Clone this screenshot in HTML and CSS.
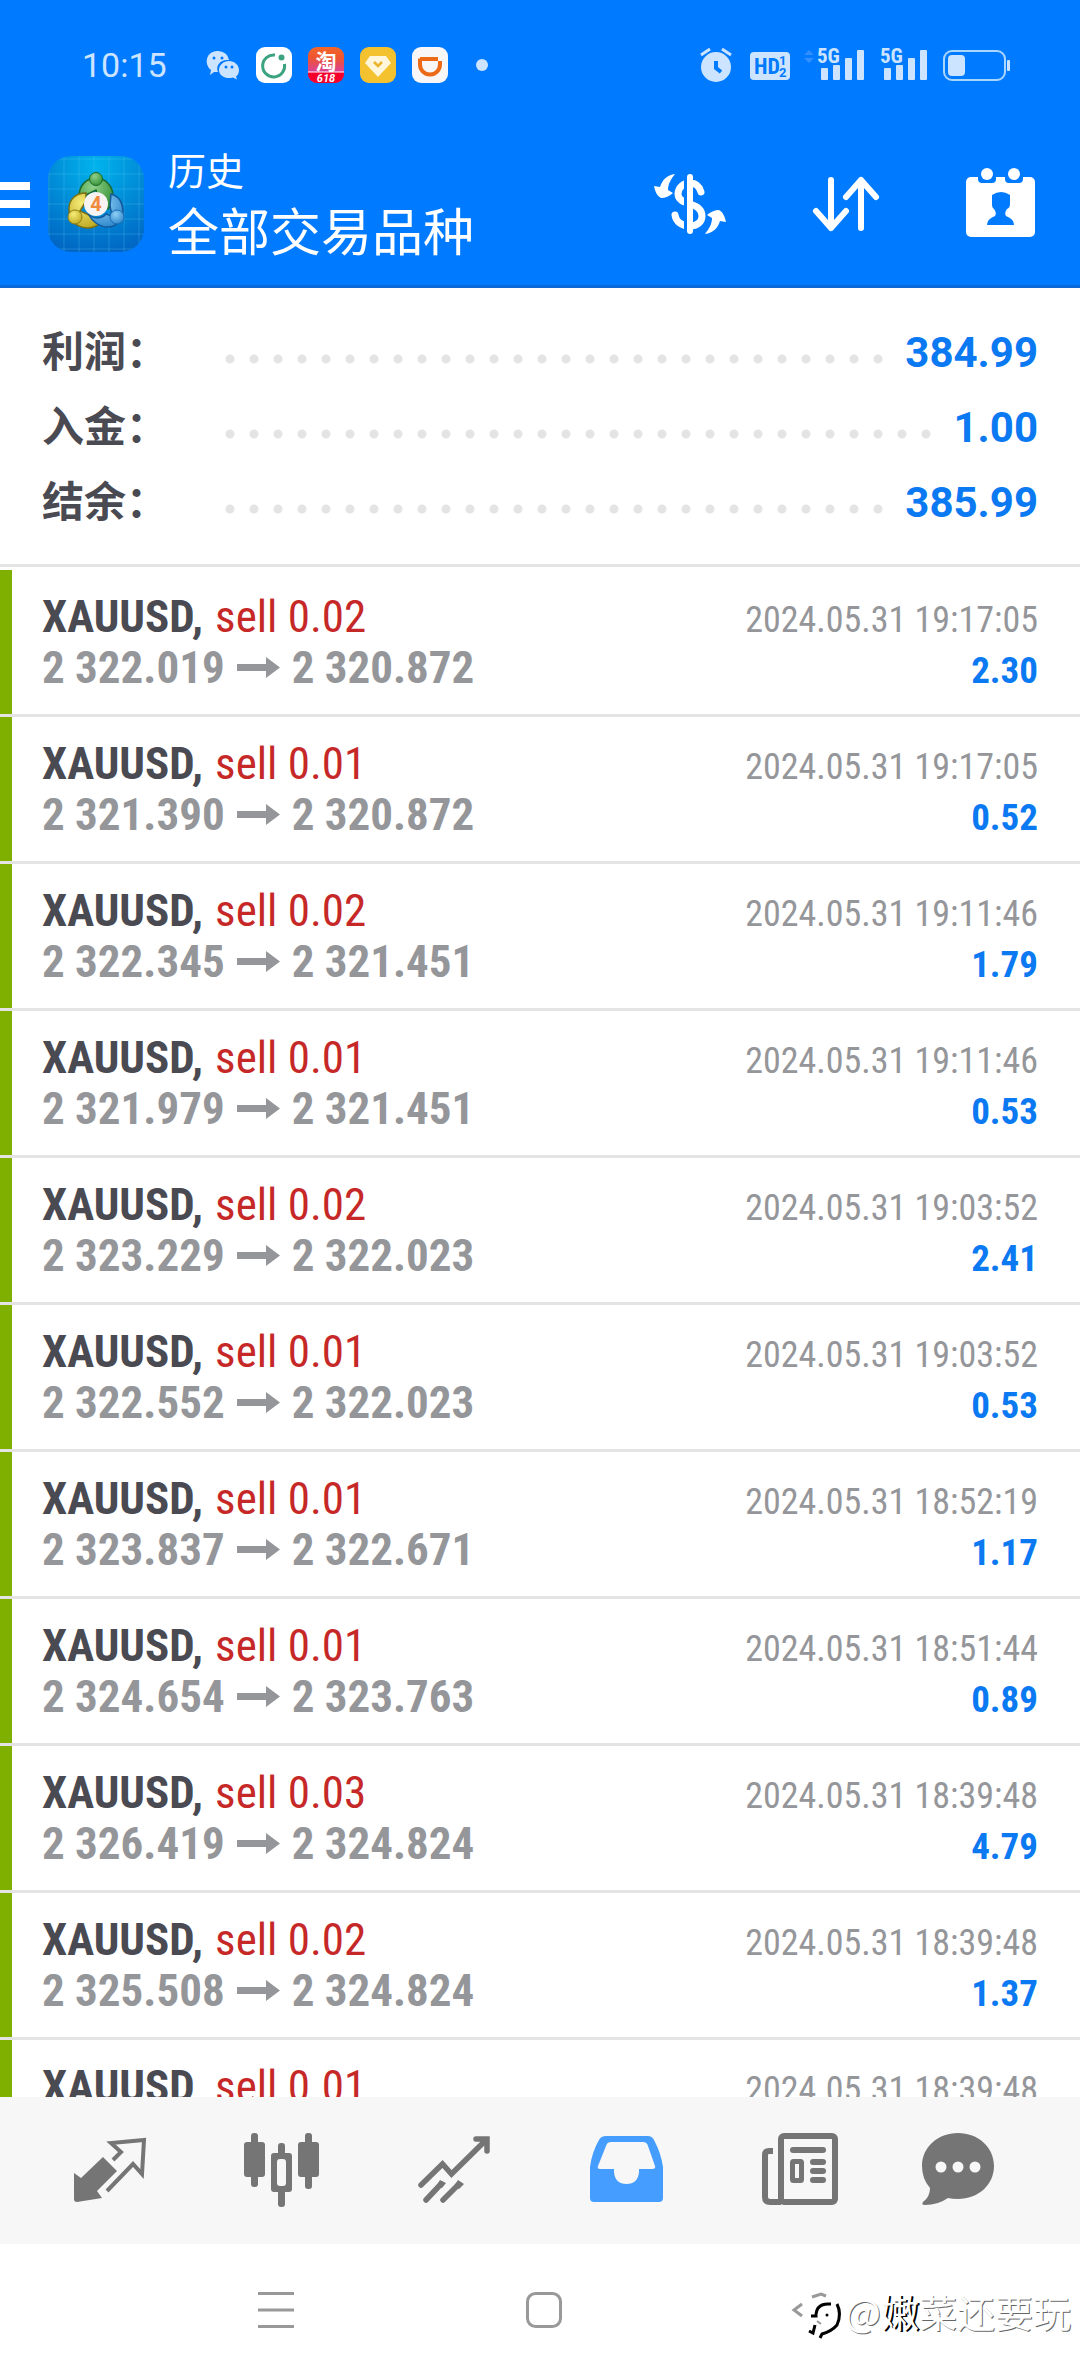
FILE: index.html
```
<!DOCTYPE html>
<html lang="zh-CN">
<head>
<meta charset="utf-8">
<meta name="viewport" content="width=device-width, initial-scale=1">
<title>历史</title>
<link rel="stylesheet" href="styles.css">
</head>
<body>
<header class="top">
  <div class="status">
    <div class="status-left">
      <time class="clock">10:15</time>
      <svg class="wechat" width="34" height="36" viewBox="0 0 34 36" aria-hidden="true">
        <g fill="#cce4ff"><path d="M12 4a11 10 0 0 1 11 9c-8-1-14 5-11 12l-4 0-4 3 1-5A10.500 10.500 0 0 1 12 4z"/><path d="M23 14c5.500 0 10 4 10 9 0 3-1 5-3 6.500l1 3-4-2c-7 2-14-1.500-14-7.500 0-5 4.500-9 10-9z"/></g>
        <g fill="#007aff"><circle cx="8" cy="11" r="1.500"/><circle cx="16" cy="11" r="1.500"/><circle cx="20" cy="20" r="1.500"/><circle cx="26" cy="20" r="1.500"/></g>
      </svg>
      <svg width="36" height="36" viewBox="0 0 36 36" aria-hidden="true"><rect width="36" height="36" rx="9" fill="#fff"/><path d="M19 8A11 11 0 1 0 28.500 17" fill="none" stroke="#3ba37f" stroke-width="3"/><circle cx="25.500" cy="10.500" r="3" fill="#3ba37f"/></svg>
      <svg width="36" height="36" viewBox="0 0 36 36" aria-hidden="true">
        <defs><linearGradient id="tb" x1="0" y1="0" x2="0" y2="1"><stop offset="0" stop-color="#f2672a"/><stop offset=".3" stop-color="#ee5530"/><stop offset=".7" stop-color="#d8419a"/></linearGradient><clipPath id="tc"><rect width="36" height="36" rx="9"/></clipPath></defs>
        <g clip-path="url(#tc)"><path fill="url(#tb)" d="M0 0h36v36H0z"/><path fill="#f5002d" d="M0 25h36v11H0z"/><path stroke="#fff" d="M0 25h36"/></g>
        <text x="18" y="22" text-anchor="middle" class="tao">淘</text><text x="18" y="35" text-anchor="middle" class="tao-sale">618</text>
      </svg>
      <svg width="36" height="36" viewBox="0 0 36 36" aria-hidden="true"><rect width="36" height="36" rx="9" fill="#f5c22f"/><path d="M10 9h16l5 7-13 14L5 16z" fill="#fff6dc"/><path d="M14 15l4 4 4-4" fill="none" stroke="#eab32a" stroke-width="2.500"/></svg>
      <svg width="36" height="36" viewBox="0 0 36 36" aria-hidden="true"><rect width="36" height="36" rx="9" fill="#f8f6f6"/><path d="M8 12h18M8 11.500v6a10 10 0 0 0 20 0V14" fill="none" stroke="#ec6a17" stroke-width="4"/></svg>
      <svg class="more-dot" width="12" height="12" viewBox="0 0 12 12" aria-hidden="true"><circle cx="6" cy="6" r="6" fill="#cce4ff"/></svg>
    </div>
    <svg width="312" height="36" viewBox="0 0 312 36" aria-hidden="true">
      <g fill="#cce4ff">
        <circle cx="16" cy="20" r="15"/><path d="M1 8l9-6M31 8l-9-6" stroke="#cce4ff" stroke-width="3"/>
        <rect x="50" y="5" width="40" height="28" rx="4"/>
        <g id="bars"><rect x="121" y="21" width="7" height="12" rx="1"/><rect x="133" y="18" width="7" height="15" rx="1"/><rect x="145" y="11" width="7" height="22" rx="1"/><rect x="157" y="3" width="7" height="30" rx="1"/></g>
        <use href="#bars" x="63"/>
        <text x="117" y="16" class="net">5G</text><text x="180" y="16" class="net">5G</text>
        <rect x="248" y="8" width="17" height="21" rx="4"/><rect x="307" y="13" width="3" height="11" rx="1"/>
      </g>
      <path d="M16 14v7l5 4" fill="none" stroke="#007aff" stroke-width="4"/>
      <g fill="#007aff"><text x="54" y="27" class="hd">HD</text><text x="79" y="18" class="hd-sim">1</text><text x="79" y="30" class="hd-sim">2</text></g>
      <path d="M104 8l5-5 5 5zM104 11l5 5 5-5z" fill="#338fff"/>
      <rect x="244" y="4" width="61" height="29" rx="8" fill="none" stroke="#a9d6ff" stroke-width="2"/>
    </svg>
  </div>
  <div class="toolbar">
    <button class="menu" aria-label="菜单"><span></span><span></span><span></span></button>
    <svg width="96" height="96" viewBox="0 0 96 96" aria-hidden="true">
      <defs>
        <radialGradient id="bg" cx=".5" cy=".1" r=".9"><stop offset="0" stop-color="#00b4ec"/><stop offset="1" stop-color="#0068c4"/></radialGradient>
        <pattern id="grid" width="15" height="15" patternUnits="userSpaceOnUse"><path d="M1 0v15M0 3h15" stroke="#5cc4f5" stroke-opacity=".28"/></pattern>
        <radialGradient id="gr" cx=".4" cy=".3" r=".8"><stop offset="0" stop-color="#8fd08a"/><stop offset="1" stop-color="#2b8a2e"/></radialGradient>
        <radialGradient id="ye" cx=".4" cy=".3" r=".8"><stop offset="0" stop-color="#f6ec78"/><stop offset="1" stop-color="#b9a41c"/></radialGradient>
        <radialGradient id="bl" cx=".4" cy=".3" r=".8"><stop offset="0" stop-color="#8ed0f6"/><stop offset="1" stop-color="#2580c8"/></radialGradient>
      </defs>
      <rect width="96" height="96" rx="23" fill="url(#bg)"/><rect width="96" height="96" rx="23" fill="url(#grid)"/>
      <path d="M31 40c0-11 8-18 17-18s17 8 17 18c0 6-2 10-5 13l-8-6-4-13-8 4-6 2z" fill="url(#gr)" stroke="#1c6a2c" stroke-width="1.500"/>
      <path d="M38 37c-10 0-17 6-17 16s6 18 18 19c6 0 10-2 13-5l-11-8-9-4 6-10z" fill="url(#ye)" stroke="#7d7012" stroke-width="1.500"/>
      <path d="M63 38c8 2 12 9 12 17s-6 16-15 16-16-6-19-12c6 4 13 4 17-1l6 2-2-10z" fill="url(#bl)" stroke="#135a9c" stroke-width="1.500"/>
      <circle cx="48" cy="23" r="6.500" fill="url(#gr)" stroke="#1c6a2c"/><circle cx="27" cy="61" r="7" fill="url(#ye)" stroke="#8d7d15"/><circle cx="69" cy="61" r="7" fill="url(#bl)" stroke="#1c6cb0"/>
      <circle cx="48" cy="48" r="12" fill="#f6f3f2"/><text x="48" y="55" text-anchor="middle" class="logo-four">4</text>
    </svg>
    <h1 class="titles"><span class="title-small">历史</span><span class="title-large">全部交易品种</span></h1>
    <div class="actions">
      <button aria-label="货币"><svg width="72" height="72" viewBox="0 0 72 72">
        <path d="M47 24C45 17 40 15 36 15 29 15 24 20 24 26 24 32 30 34 36 36 43 38 48 42 48 48 48 54 43 58 36 58 28 58 22 54 21 47" fill="none" stroke="#fff" stroke-width="7" stroke-linecap="round"/>
        <path d="M31.500 8v56" stroke="#007aff" stroke-width="3"/><path d="M36 9v54" stroke="#fff" stroke-width="6" stroke-linecap="round"/>
        <g fill="#fff"><path id="swap" d="M21 6C13 7 8 12 6 19L0 18c1 5 3 10 7 12 4 0 9-2 12-5l-5-3c0-6 3-11 7-16z"/><use href="#swap" transform="rotate(180 36 36)"/></g></svg></button>
      <button aria-label="排序"><svg width="72" height="72" viewBox="0 0 72 72"><path d="M21 12v48M6 43l15 17 15-17M51 60V12M36 29l15-17 15 17" fill="none" stroke="#fff" stroke-width="6" stroke-linecap="round" stroke-linejoin="round"/></svg></button>
      <button aria-label="日期"><svg width="72" height="72" viewBox="0 0 72 72"><rect y="9" width="69" height="60" rx="5" fill="#fff"/><path d="M12 8v3q0 4 4 4h10q4 0 4-4V8zM39 8v3q0 4 4 4h10q4 0 4-4V8z" fill="#007aff"/><circle cx="21" cy="6" r="6" fill="#fff"/><circle cx="48" cy="6" r="6" fill="#fff"/><path d="M26 27q9-6 18 0v9q0 4-3 5-3 4-1 7 8 3 8 9H21q0-6 8-9 2-3-1-7-2-1-2-5z" fill="#007aff"/></svg></button>
    </div>
  </div>
</header>

<main class="history">
  <dl class="summary">
    <div><dt>利润：</dt><dd>384.99</dd></div>
    <div><dt>入金：</dt><dd>1.00</dd></div>
    <div><dt>结余：</dt><dd>385.99</dd></div>
  </dl>
  <svg class="defs" width="0" height="0" aria-hidden="true"><symbol id="arrow" viewBox="0 0 43 21"><path d="M0 7h29V0l14 10.500L29 21v-7H0z" fill="#95969a"/></symbol></svg>
  <ul class="deals">
    <li><p><strong>XAUUSD,</strong> <span class="sell">sell 0.02</span><time>2024.05.31 19:17:05</time></p><p class="price">2 322.019<svg class="arrow"><use href="#arrow"/></svg>2 320.872<b>2.30</b></p></li>
    <li><p><strong>XAUUSD,</strong> <span class="sell">sell 0.01</span><time>2024.05.31 19:17:05</time></p><p class="price">2 321.390<svg class="arrow"><use href="#arrow"/></svg>2 320.872<b>0.52</b></p></li>
    <li><p><strong>XAUUSD,</strong> <span class="sell">sell 0.02</span><time>2024.05.31 19:11:46</time></p><p class="price">2 322.345<svg class="arrow"><use href="#arrow"/></svg>2 321.451<b>1.79</b></p></li>
    <li><p><strong>XAUUSD,</strong> <span class="sell">sell 0.01</span><time>2024.05.31 19:11:46</time></p><p class="price">2 321.979<svg class="arrow"><use href="#arrow"/></svg>2 321.451<b>0.53</b></p></li>
    <li><p><strong>XAUUSD,</strong> <span class="sell">sell 0.02</span><time>2024.05.31 19:03:52</time></p><p class="price">2 323.229<svg class="arrow"><use href="#arrow"/></svg>2 322.023<b>2.41</b></p></li>
    <li><p><strong>XAUUSD,</strong> <span class="sell">sell 0.01</span><time>2024.05.31 19:03:52</time></p><p class="price">2 322.552<svg class="arrow"><use href="#arrow"/></svg>2 322.023<b>0.53</b></p></li>
    <li><p><strong>XAUUSD,</strong> <span class="sell">sell 0.01</span><time>2024.05.31 18:52:19</time></p><p class="price">2 323.837<svg class="arrow"><use href="#arrow"/></svg>2 322.671<b>1.17</b></p></li>
    <li><p><strong>XAUUSD,</strong> <span class="sell">sell 0.01</span><time>2024.05.31 18:51:44</time></p><p class="price">2 324.654<svg class="arrow"><use href="#arrow"/></svg>2 323.763<b>0.89</b></p></li>
    <li><p><strong>XAUUSD,</strong> <span class="sell">sell 0.03</span><time>2024.05.31 18:39:48</time></p><p class="price">2 326.419<svg class="arrow"><use href="#arrow"/></svg>2 324.824<b>4.79</b></p></li>
    <li><p><strong>XAUUSD,</strong> <span class="sell">sell 0.02</span><time>2024.05.31 18:39:48</time></p><p class="price">2 325.508<svg class="arrow"><use href="#arrow"/></svg>2 324.824<b>1.37</b></p></li>
    <li><p><strong>XAUUSD,</strong> <span class="sell">sell 0.01</span><time>2024.05.31 18:39:48</time></p></li>
  </ul>
</main>

<nav class="tabs">
  <a href="#quotes" aria-label="行情"><svg width="96" height="75" viewBox="0 0 96 75"><path d="M12 40l7 5 22-21 14 14-20 20 5 7-25 4q-3 0-3-3z" fill="#757575"/><path d="M51 27l8-8-10-9 33-3-2 34-9-10-26 27" fill="none" stroke="#757575" stroke-width="4"/></svg></a>
  <a href="#chart" aria-label="图表"><svg width="96" height="75" viewBox="0 0 96 75"><g fill="#757575"><rect x="17" width="7" height="54" rx="3"/><rect x="10" y="9" width="21" height="35" rx="3"/><rect x="71" width="7" height="56" rx="3"/><rect x="64" y="9" width="21" height="35" rx="3"/><rect x="44" y="10" width="7" height="64" rx="3"/><rect x="37" y="20" width="21" height="39" rx="3"/></g><rect x="43" y="26" width="9" height="27" rx="3" fill="#f7f7f7"/></svg></a>
  <a href="#trade" aria-label="交易"><svg width="96" height="75" viewBox="0 0 96 75"><g fill="none" stroke="#757575" stroke-width="5.500" stroke-linecap="round"><path d="M15 52l21.500-21 9 10L79 8M70 6h11v12"/><path d="M20 67l15-16M37 67l15-15"/></g><path d="M34 47l-3 5 5 3 4-5zM52 47l-4 6 5 3 5-5z" fill="#757575"/></svg></a>
  <a href="#history" aria-label="历史" aria-current="page"><svg width="96" height="75" viewBox="0 0 96 75"><path fill="#459dff" fill-rule="evenodd" d="M28 3h42q4 0 6 4 7 13 9 27v31q0 4-4 4H16q-4 0-4-4V34q2-15 9-27 2-4 7-4zm5 6q-4 0-5 4l-8 20q-1 3 2 3h14v3q1 12 12.500 12T61 39v-3h13q4 0 3-3l-7-20q-1-4-5-4z"/></svg></a>
  <a href="#news" aria-label="新闻"><svg width="96" height="75" viewBox="0 0 96 75"><g fill="none" stroke="#757575" stroke-width="6"><rect x="31" y="3" width="54" height="66" rx="3"/><path d="M31 69H20q-5 0-5-5V22q0-4 4-4h4"/><rect x="42.500" y="28.500" width="9" height="19" rx="1" stroke-width="5"/><path d="M43 17h30M63 29h10M63 38h10M63 47h10" stroke-linecap="round"/></g></svg></a>
  <a href="#messages" aria-label="消息"><svg width="96" height="75" viewBox="0 0 96 75"><path d="M36 0c20 0 36 14 36 33S56 66 36 66q-6 0-10-1-10 7-23 7-4 0-2-3 7-5 7-14Q0 46 0 33C0 14 16 0 36 0z" fill="#757575"/><g fill="#f7f7f7"><circle cx="19" cy="34" r="5.500"/><circle cx="36" cy="34" r="5.500"/><circle cx="53" cy="34" r="5.500"/></g></svg></a>
</nav>

<footer class="system">
  <button aria-label="最近任务"><svg width="36" height="36" viewBox="0 0 36 36"><path d="M0 1.500h36M0 18h36M0 34.500h36" stroke="#999" stroke-width="3"/></svg></button>
  <button aria-label="主屏幕"><svg width="36" height="36" viewBox="0 0 36 36"><rect x="1.500" y="1.500" width="33" height="33" rx="8" fill="none" stroke="#999" stroke-width="3"/></svg></button>
  <button aria-label="返回"><svg width="36" height="36" viewBox="0 0 36 36"><path d="M8 12l-8 6 8 6M18 5l9-3 5 2" fill="none" stroke="#999" stroke-width="3"/></svg></button>
  <p class="watermark"><svg width="44" height="50" viewBox="0 0 44 50" aria-hidden="true"><path d="M10 26h5q0-12 12-12h3M14 35l-2 8-4-2" fill="none" stroke="#000" stroke-width="3"/><path d="M36 14q5 10 0 21-5 6-15 9l-2 4" fill="none" stroke="#000" stroke-width="3"/><path d="M16 31l4 3" stroke="#999" stroke-width="2"/><circle cx="26" cy="25" r="1.500"/></svg><span>@<b>嫩</b>菜还要玩</span></p>
</footer>
</body>
</html>
```

FILE: styles.css
```
* { box-sizing: border-box; }

body {
  margin: 0;
  height: 100vh;
  display: flex;
  flex-direction: column;
  background: #fff;
  color: #4a4a52;
  font-family: Roboto, "Noto Sans CJK SC", sans-serif;
}

h1, p, dl, dd, ul { margin: 0; padding: 0; }
svg { display: block; flex: none; overflow: visible; }
button { padding: 0; border: 0; background: none; cursor: pointer; }

/* Status bar and toolbar */
.top {
  flex: none;
  background: #007aff;
  box-shadow: inset 0 -3px #0b68d6;
  color: #fff;
}

.status {
  display: flex;
  justify-content: space-between;
  align-items: center;
  height: 120px;
  padding: 10px 68px 0 82px;
}

.status-left { display: flex; align-items: center; gap: 16px; }
.clock { width: 108px; font-size: 34px; line-height: 36px; color: #cce4ff; }
.more-dot { margin-left: 12px; }
.tao { font: bold 21px "Noto Sans CJK SC", sans-serif; fill: #fff; }
.tao-sale { font: italic bold 11px Roboto, sans-serif; fill: #fff; }
.net { font: bold 21px "Roboto Condensed", sans-serif; }
.hd { font: bold 22px "Roboto Condensed", sans-serif; }
.hd-sim { font: bold 13px Roboto, sans-serif; }

.toolbar {
  display: flex;
  align-items: center;
  height: 168px;
  padding-right: 42px;
}

.menu { display: grid; gap: 10px; width: 30px; margin-right: 18px; }
.menu span { height: 8px; background: #fff; }
.logo-four { font: bold 20px Roboto, sans-serif; fill: #f08a3c; }

.titles {
  display: flex;
  flex-direction: column;
  margin-left: 24px;
  padding-bottom: 6px;
  font-family: "Noto Sans CJK SC", sans-serif;
  font-weight: 400;
}

.title-small { font-size: 38px; line-height: 56px; }
.title-large { font-size: 51px; line-height: 64px; }
.actions { display: flex; gap: 84px; margin-left: auto; }

/* Account totals */
.history { flex: 1; min-height: 0; overflow: hidden; }

.summary {
  padding: 27px 42px 24px;
  border-bottom: 3px solid #e4e4e4;
  font-size: 42px;
  line-height: 75px;
  font-weight: 700;
}

.summary div { display: flex; }
.summary dt { width: 176px; }

.summary dd {
  display: flex;
  flex: 1;
  color: #0a79f2;
}

.summary dd::before {
  content: "";
  flex: 1;
  margin-right: 14px;
  background: radial-gradient(circle at 12px 44px, #e4e4e4 4px, transparent 5px) 0 0 / 24px 75px repeat-x;
}

/* Deals */
.defs { position: absolute; }
.deals { padding-top: 3px; list-style: none; }

.deals li {
  height: 147px;
  padding: 21px 42px 0;
  border-bottom: 3px solid #e4e4e4;
  background: linear-gradient(#7fb000, #7fb000) 0 0 / 12px 100% no-repeat;
  font: 45px/51px "Roboto Condensed", sans-serif;
}

.deals p { display: flex; align-items: baseline; gap: 12px; height: 51px; }
.sell { color: #c62828; }
.deals time { margin-left: auto; font-size: 36px; color: #95969a; }
.deals .price { font-weight: 700; color: #95969a; }
.arrow { width: 43px; height: 21px; align-self: center; }
.price b { margin-left: auto; font-size: 37px; font-weight: 700; color: #0a79f2; }

/* Bottom tabs */
.tabs {
  flex: none;
  display: flex;
  height: 147px;
  padding: 0 24px;
  background: #f7f7f7;
}

.tabs a { flex: 1; display: flex; align-items: center; justify-content: center; }

/* System navigation */
.system {
  position: relative;
  flex: none;
  display: flex;
  justify-content: space-around;
  height: 132px;
  padding: 0 134px 0 142px;
}

.watermark {
  position: absolute;
  right: 9px;
  bottom: 36px;
  display: flex;
  align-items: flex-start;
  font: 38px/42px "Noto Sans CJK SC", sans-serif;
  color: #fff;
  text-shadow: 1px 1px #666;
}

.watermark b { font-weight: 400; text-shadow: 2px 1px #000; }
```
